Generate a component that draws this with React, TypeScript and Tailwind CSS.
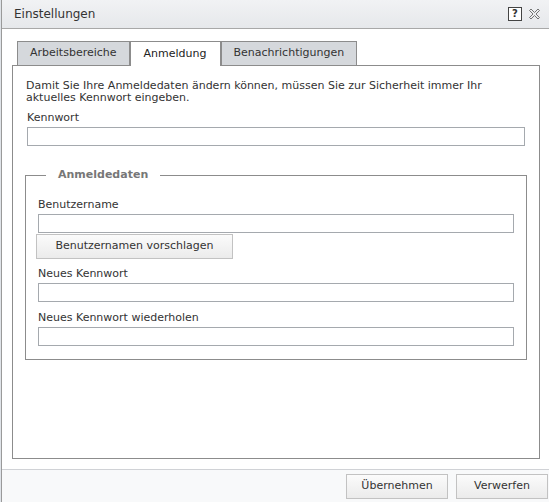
import React from 'react'

const FONT = { fontFamily: '"DejaVu Sans", Verdana, sans-serif' }

function Field({ label, className = '' }: { label: string; className?: string }) {
  return (
    <div className={className}>
      <div className="h-[13px] leading-[13px] text-[#333]">{label}</div>
      <input
        type="text"
        className="mt-[3px] block h-[19px] w-full border border-[#a5a9ae] bg-white outline-none"
      />
    </div>
  )
}

function Tab({ label, active }: { label: string; active?: boolean }) {
  return (
    <div
      className={
        active
          ? 'relative z-10 -mb-px flex h-[25px] items-center border-x border-t border-[#8c8c8c] bg-white px-[13px] text-[#222]'
          : 'flex h-[24px] items-center border-x border-t border-[#8c8c8c] bg-[#d5d8dc] px-[12px] text-[#333]'
      }
    >
      {label}
    </div>
  )
}

export default function App() {
  return (
    <div className="h-[502px] w-[549px] bg-[#dfe3e8] pl-px text-[11px]" style={FONT}>
      <div className="flex h-full flex-col border-l border-[#9a9a9a] bg-white">
        {/* title bar */}
        <div className="flex h-[29px] shrink-0 items-center border-b border-[#a8a8a8] bg-gradient-to-b from-[#f1f2f4] to-[#e6e8eb] pl-[12px] pr-[8px]">
          <span className="text-[12px] text-[#333]">Einstellungen</span>
          <div className="ml-auto flex items-center gap-[6px]">
            <span className="flex h-[14px] w-[14px] items-center justify-center border border-[#444] bg-white text-[10px] font-bold leading-none text-[#333]">
              ?
            </span>
            <svg width="13" height="13" viewBox="0 0 13 13" className="text-[#666]">
              <path
                d="M1.5 2.5 L3 1 L6.5 4.5 L10 1 L11.5 2.5 L8 6 L11.5 9.5 L10 11 L6.5 7.5 L3 11 L1.5 9.5 L5 6 Z"
                fill="none"
                stroke="currentColor"
                strokeWidth="0.9"
                strokeLinejoin="round"
              />
            </svg>
          </div>
        </div>

        {/* body */}
        <div className="flex flex-1 flex-col px-[10px] pt-[12px]">
          <div className="ml-[5px] flex items-end">
            <Tab label="Arbeitsbereiche" />
            <Tab label="Anmeldung" active />
            <Tab label="Benachrichtigungen" />
          </div>
          <div className="h-[394px] w-[528px] border border-[#8c8c8c] px-[13px] pt-[14px]">
            <p className="leading-[12px] text-[#333]">
              Damit Sie Ihre Anmeldedaten ändern können, müssen Sie zur Sicherheit immer Ihr
              <br />
              aktuelles Kennwort eingeben.
            </p>
            <Field label="Kennwort" className="ml-px mt-[7px] w-[498px]" />

            <fieldset className="-ml-px mt-[21px] w-[502px] border border-[#8c8c8c] px-[12px] pb-[13px] pt-0">
              <legend className="ml-[8px] px-[12px] font-bold text-[#777]">Anmeldedaten</legend>
              <Field label="Benutzername" className="mt-[14px] w-[476px]" />
              <button className="-ml-[2px] mt-px flex h-[25px] w-[197px] items-center justify-center border border-[#c2c2c2] bg-gradient-to-b from-[#fbfbfb] to-[#ebebeb] text-[#333]">
                Benutzernamen vorschlagen
              </button>
              <Field label="Neues Kennwort" className="mt-[8px] w-[476px]" />
              <Field label="Neues Kennwort wiederholen" className="mt-[9px] w-[476px]" />
            </fieldset>
          </div>
        </div>

        {/* footer */}
        <div className="mt-[10px] flex h-[34px] shrink-0 items-center justify-end gap-[8px] border-t border-[#d0d2d6] border-b border-b-[#bbb] bg-[#f8f9fa] pr-px">
          <button className="h-[25px] w-[102px] border border-[#c2c2c2] bg-gradient-to-b from-[#fbfbfb] to-[#ebebeb] text-[#333]">
            Übernehmen
          </button>
          <button className="h-[25px] w-[92px] border border-[#c2c2c2] bg-gradient-to-b from-[#fbfbfb] to-[#ebebeb] text-[#333]">
            Verwerfen
          </button>
        </div>
      </div>
    </div>
  )
}
